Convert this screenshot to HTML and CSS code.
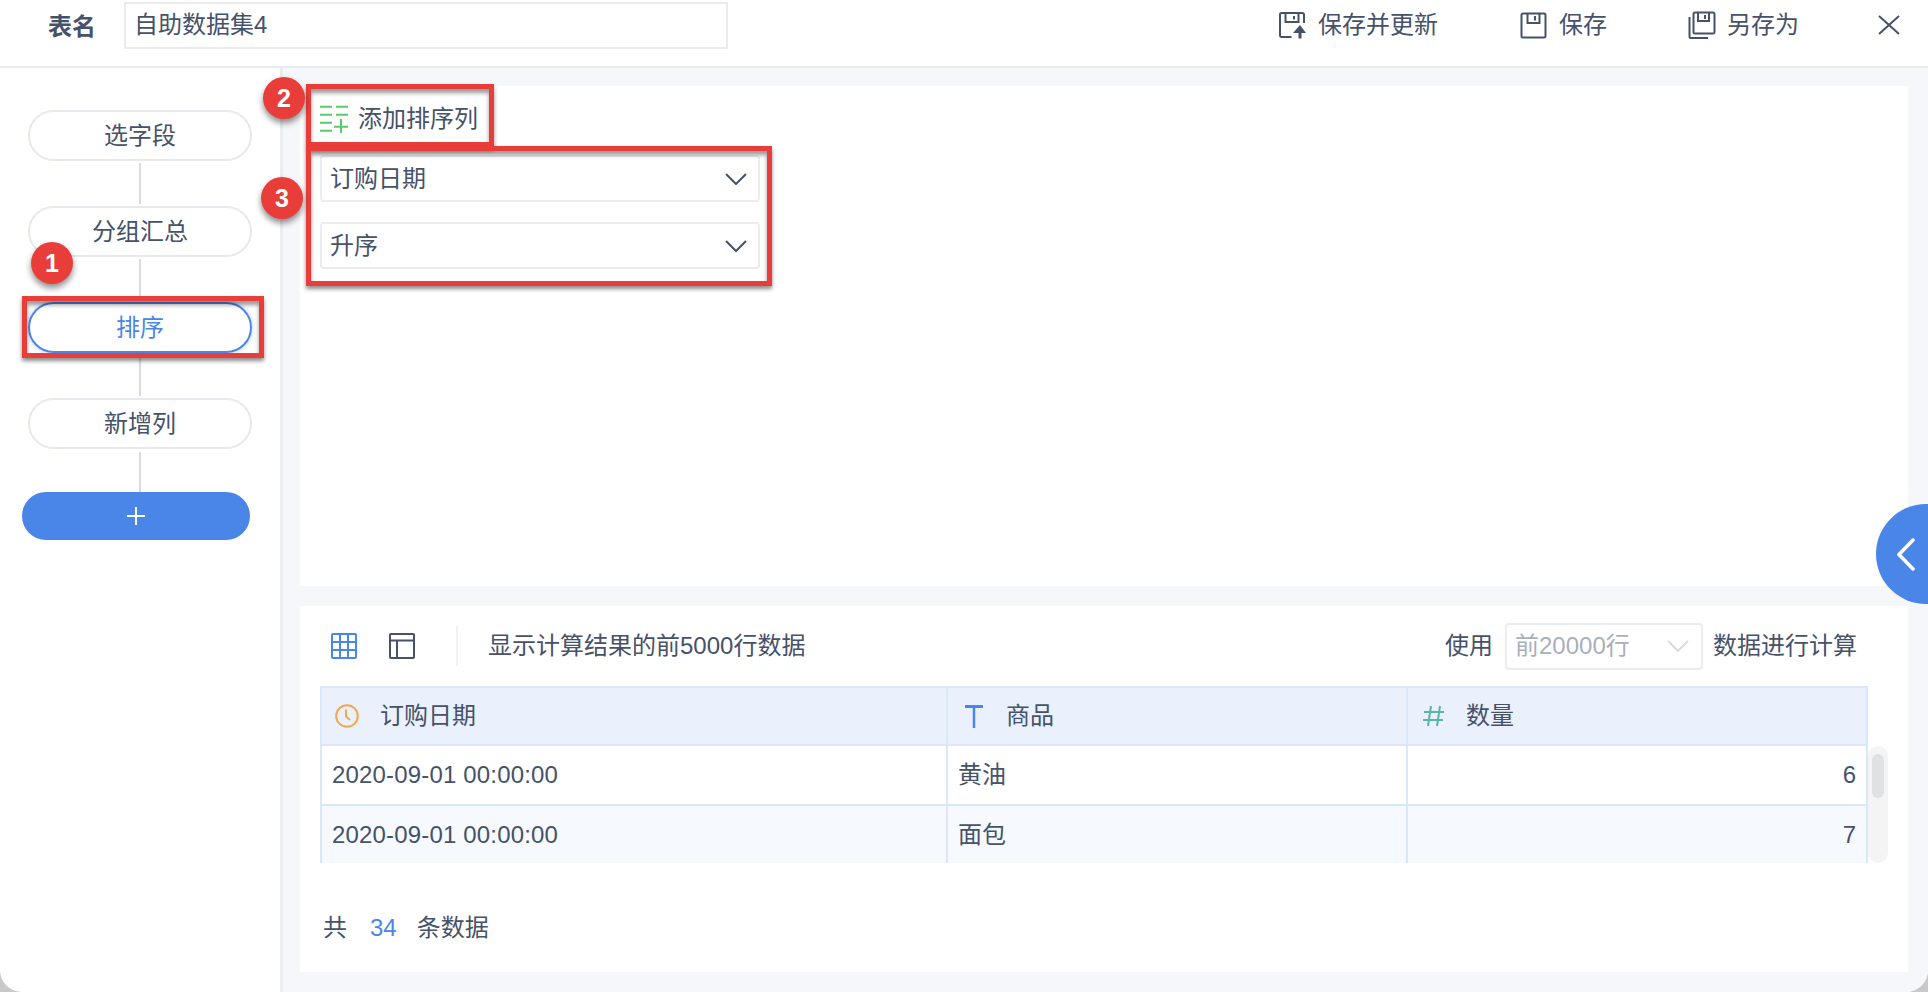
FILE: index.html
```html
<!DOCTYPE html>
<html lang="zh-CN">
<head>
<meta charset="utf-8">
<title>自助数据集4</title>
<link rel="stylesheet" href="styles.css">
</head>
<body>
<div class="window">
  <header class="topbar">
    <span class="name-label">表名</span>
    <div class="name-input">自助数据集4</div>
    <div class="actions">
      <span class="action a1">
        <svg class="ico-save" viewBox="0 0 28 27"><path d="M12.500 25H2.500A1.500 1.500 0 0 1 1 23.500V2.500A1.500 1.500 0 0 1 2.500 1h21A1.500 1.500 0 0 1 25 2.500V11" class="s"/><path d="M6.500 1.500v8.500h13V1.500M15 4v3.500" class="s"/><path d="M21 13l6 8h-4.500v5.500h-3V21H14z" class="f"/></svg>
        保存并更新
      </span>
      <span class="action a2">
        <svg class="ico-save" viewBox="0 0 27 27"><path d="M3 1.500h21A1.500 1.500 0 0 1 25.500 3v21a1.500 1.500 0 0 1-1.500 1.500H3A1.500 1.500 0 0 1 1.500 24V3A1.500 1.500 0 0 1 3 1.500z" class="s"/><path d="M7.500 2v9h12V2M15 4v4.500" class="s"/></svg>
        保存
      </span>
      <span class="action a3">
        <svg class="ico-save wide" viewBox="0 0 28 28"><path d="M7 1.500h18a1.500 1.500 0 0 1 1.500 1.500v18a1.500 1.500 0 0 1-1.500 1.500H7A1.500 1.500 0 0 1 5.500 21V3A1.500 1.500 0 0 1 7 1.500z" class="s"/><path d="M10 2v8h11V2M17 4v4M1.500 6v19.500a1.500 1.500 0 0 0 1.500 1.500h17" class="s"/></svg>
        另存为
      </span>
      <svg class="ico-close" viewBox="0 0 22 20"><path d="M1 1l20 18M21 1L1 19" class="s"/></svg>
    </div>
  </header>

  <div class="body">
    <aside class="steps">
      <div class="step">选字段</div>
      <div class="link"></div>
      <div class="step">分组汇总</div>
      <div class="link"></div>
      <div class="step active">排序</div>
      <div class="link"></div>
      <div class="step">新增列</div>
      <div class="link last"></div>
      <div class="add-step">
        <svg class="ico-plus" viewBox="0 0 18 18"><path d="M9 0v18M0 9h18"/></svg>
      </div>
    </aside>

    <main class="content">
      <section class="panel config">
        <div class="add-sort">
          <svg class="ico-add" viewBox="0 0 28 28"><path d="M0 1.700h12M16 1.700h12M0 9.700h12M16 9.700h12M0 17.700h12M0 25.700h12M14 21.700h14M21 14v14"/></svg>
          添加排序列
        </div>
        <div class="select">订购日期<svg class="chev" viewBox="0 0 22 12"><path d="M1 1l10 10L21 1"/></svg></div>
        <div class="select second">升序<svg class="chev" viewBox="0 0 22 12"><path d="M1 1l10 10L21 1"/></svg></div>
      </section>

      <section class="panel preview">
        <div class="toolbar">
          <svg class="ico-view" viewBox="0 0 26 26"><path class="grid" d="M2 1h22a1 1 0 0 1 1 1v22a1 1 0 0 1-1 1H2a1 1 0 0 1-1-1V2a1 1 0 0 1 1-1zM9 1v24M17 1v24M1 9h24M1 17h24"/></svg>
          <svg class="ico-view second" viewBox="0 0 26 26"><path class="s" d="M2 1h22a1 1 0 0 1 1 1v22a1 1 0 0 1-1 1H2a1 1 0 0 1-1-1V2a1 1 0 0 1 1-1zM1 7.500h24M8 7.500V25"/></svg>
          <span class="divider"></span>
          <span class="hint">显示计算结果的前5000行数据</span>
          <span class="use">使用</span>
          <div class="row-select">前20000行<svg class="chev light" viewBox="0 0 22 12"><path d="M1 1l10 10L21 1"/></svg></div>
          <span class="use-tail">数据进行计算</span>
        </div>

        <div class="table-wrap">
          <div class="table">
            <div class="row head">
              <div class="cell c1"><svg class="ico-type" viewBox="0 0 24 24"><circle cx="12" cy="12" r="10.800" fill="none" stroke="#f2a84c" stroke-width="2"/><path d="M11 5.500v7l4 3.500" fill="none" stroke="#f2a84c" stroke-width="2"/></svg>订购日期</div>
              <div class="cell c2"><svg class="ico-type" viewBox="0 0 24 24"><path d="M3 2.500h18" fill="none" stroke="#4a86e8" stroke-width="3"/><path d="M12 2.500V24" fill="none" stroke="#4a86e8" stroke-width="2.500"/></svg>商品</div>
              <div class="cell c3"><svg class="ico-type" viewBox="0 0 24 24"><path d="M9 2L6 22M18 2l-3 20M2 8h20M1 16h20" fill="none" stroke="#5bb5a6" stroke-width="2"/></svg>数量</div>
            </div>
            <div class="row">
              <div class="cell c1 date">2020-09-01 00:00:00</div>
              <div class="cell c2">黄油</div>
              <div class="cell c3 num">6</div>
            </div>
            <div class="row even">
              <div class="cell c1 date">2020-09-01 00:00:00</div>
              <div class="cell c2">面包</div>
              <div class="cell c3 num">7</div>
            </div>
          </div>
          <div class="scroll"><div class="thumb"></div></div>
        </div>

        <div class="total"><span>共</span><span class="count">34</span><span>条数据</span></div>
      </section>
    </main>
  </div>

  <div class="collapse"><svg viewBox="0 0 18 33"><path d="M16 2L2 16.500 16 31"/></svg></div>

  <div class="mark box-1"></div>
  <div class="mark box-2"></div>
  <div class="mark box-3"></div>
  <div class="badge b1">1</div>
  <div class="badge b2">2</div>
  <div class="badge b3">3</div>
</div>
</body>
</html>
```
FILE: styles.css
```css
* { box-sizing: border-box; }
html, body { margin: 0; height: 100%; }
body {
  background: #c9c9c9;
  font-family: "Liberation Sans", "Noto Sans CJK SC", sans-serif;
  font-size: 24px;
  line-height: 28px;
  color: #46516a;
  overflow: hidden;
}
.window {
  position: relative;
  width: 1928px;
  height: 992px;
  background: #fff;
  border-radius: 0 0 22px 22px;
  overflow: hidden;
  display: flex;
  flex-direction: column;
}
.s { fill: none; stroke: #46516a; stroke-width: 2; }
.f { fill: #46516a; }

/* top bar */
.topbar {
  height: 68px;
  flex: none;
  display: flex;
  align-items: flex-start;
  border-bottom: 2px solid #e9ebf0;
  background: #fff;
}
.name-label {
  margin: 10px 0 0 48px;
  width: 76px;
  line-height: 34px;
  font-weight: 700;
}
.name-input {
  width: 604px;
  height: 47px;
  margin-top: 2px;
  padding-left: 8px;
  line-height: 41px;
  border: 2px solid #e9ebf0;
}
.actions {
  margin-left: auto;
  display: flex;
  align-items: center;
  height: 50px;
}
.action { display: flex; align-items: center; gap: 12px; white-space: nowrap; }
.a1 { margin-right: 82px; gap: 11px; }
.a2 { margin-right: 81px; }
.a3 { margin-right: 79px; gap: 11px; }
.ico-save { width: 27px; height: 27px; }
.a1 .ico-save { width: 28px; }
.ico-save.wide { width: 28px; height: 28px; }
.ico-close { width: 22px; height: 20px; margin-right: 28px; }

/* body */
.body { flex: 1; display: flex; min-height: 0; }
.steps {
  width: 283px;
  flex: none;
  border-right: 3px solid #ebedf2;
  padding: 42px 0 0 22px;
  display: flex;
  flex-direction: column;
  align-items: flex-start;
}
.step {
  width: 224px;
  height: 51px;
  margin-left: 6px;
  border: 2px solid #e8e9ee;
  border-radius: 26px;
  text-align: center;
  line-height: 47px;
}
.step.active {
  color: #4a86e8;
  border-color: #4a86e8;
  box-shadow: 0 0 5px rgba(74, 134, 232, .4);
}
.link {
  width: 2px;
  height: 41px;
  margin: 2px 0 2px 117px;
  background: #d9dbe0;
}
.link.last { height: 40px; margin-top: 3px; margin-bottom: 0; }
.add-step {
  width: 228px;
  height: 48px;
  border-radius: 24px;
  background: #4a86e8;
  display: flex;
  align-items: center;
  justify-content: center;
}
.ico-plus { width: 18px; height: 18px; fill: none; stroke: #fff; stroke-width: 2; }

.content {
  flex: 1;
  min-width: 0;
  background: #f5f7fa;
  padding: 18px 20px 20px 17px;
  display: flex;
  flex-direction: column;
  gap: 20px;
}
.panel { background: #fff; }
.config { height: 500px; padding: 19px 20px 0 20px; flex: none; }
.add-sort {
  display: flex;
  align-items: center;
  gap: 10px;
  height: 28px;
}
.ico-add { width: 28px; height: 28px; fill: none; stroke: #59c96b; stroke-width: 2; }
.select {
  width: 440px;
  height: 47px;
  margin-top: 22px;
  padding: 0 11px 0 8px;
  border: 2px solid #ebecf0;
  border-radius: 4px;
  display: flex;
  align-items: center;
  justify-content: space-between;
}
.select.second { margin-top: 20px; }
.chev { width: 22px; height: 12px; fill: none; stroke: #46516a; stroke-width: 2; }
.chev.light { stroke: #d8dbe1; }

.preview { flex: 1; padding: 0 0 0 20px; display: flex; flex-direction: column; min-height: 0; }
.toolbar { height: 80px; flex: none; display: flex; align-items: center; }
.ico-view { width: 26px; height: 26px; margin-left: 11px; flex: none; }
.ico-view.second { margin-left: 32px; }
.grid { fill: none; stroke: #4a86e8; stroke-width: 2; }
.divider { width: 2px; height: 40px; background: #f0f2f5; margin: 0 30px 0 41px; }
.hint { flex: 1; }
.use { margin-right: 12px; }
.row-select {
  width: 198px;
  height: 47px;
  padding: 0 12px 0 8px;
  border: 2px solid #ebecf2;
  border-radius: 4px;
  color: #a9afbb;
  display: flex;
  align-items: center;
  justify-content: space-between;
}
.use-tail { margin: 0 51px 0 10px; }

.table-wrap { display: flex; height: 177px; flex: none; }
.table { width: 1548px; flex: none; border-left: 2px solid #dbe7fb; border-right: 2px solid #dbe7fb; border-top: 2px solid #dbe7fb; overflow: hidden; }
.row { display: flex; height: 60px; border-bottom: 2px solid #dbe7fb; }
.row.head { height: 58px; background: #eaf1fc; }
.row.even { background: #f6f9fe; }
.cell { display: flex; align-items: center; padding: 0 10px 0 10px; border-right: 2px solid #dbe7fb; white-space: nowrap; }
.c1 { width: 626px; }
.c2 { width: 460px; }
.c3 { flex: 1; border-right: 0; }
.date { letter-spacing: .17px; }
.row.head .c1 { padding-left: 13px; }
.row.head .c1 .ico-type { margin-right: 21px; }
.row.head .c2 { padding-left: 14px; }
.row.head .c2 .ico-type { margin-right: 20px; }
.row.head .c3 { padding-left: 14px; }
.row.head .c3 .ico-type { margin-right: 20px; }
.ico-type { width: 24px; height: 24px; margin-right: 22px; flex: none; }
.num { justify-content: flex-end; }
.scroll { width: 20px; background: #f4f4f4; border-radius: 10px; margin-top: 60px; padding: 8px 4px; }
.thumb { height: 44px; background: #e0e1e3; border-radius: 6px; }

.total { display: flex; gap: 22px; margin: 0 0 0 3px; height: 109px; align-items: center; padding-top: 21px; line-height: 1; }
.count { color: #4a86e8; margin: 0 -2px 0 1px; }

/* overlays */
.collapse {
  position: absolute;
  left: 1876px;
  top: 504px;
  width: 52px;
  height: 100px;
  background: #4a86e8;
  border-radius: 50px 0 0 50px;
  padding: 34px 0 0 21px;
}
.collapse svg { display: block; width: 18px; height: 33px; fill: none; stroke: #fff; stroke-width: 3.500; stroke-linecap: round; }

.mark {
  position: absolute;
  border: 5px solid #e93d3a;
  box-shadow: 0 3px 4px rgba(0, 0, 0, .45), inset 0 4px 4px rgba(0, 0, 0, .4);
}
.box-1 { left: 22px; top: 296px; width: 242px; height: 62px; }
.box-2 { left: 306px; top: 84px; width: 188px; height: 63px; }
.box-3 { left: 306px; top: 146px; width: 466px; height: 140px; }
.badge {
  position: absolute;
  width: 42px;
  height: 42px;
  border-radius: 50%;
  background: #e93d3a;
  color: #fff;
  font-weight: 700;
  font-size: 25px;
  text-align: center;
  line-height: 42px;
  box-shadow: 0 4px 6px rgba(0, 0, 0, .45);
}
.b1 { left: 31px; top: 242px; }
.b2 { left: 263px; top: 77px; }
.b3 { left: 261px; top: 177px; }
```
